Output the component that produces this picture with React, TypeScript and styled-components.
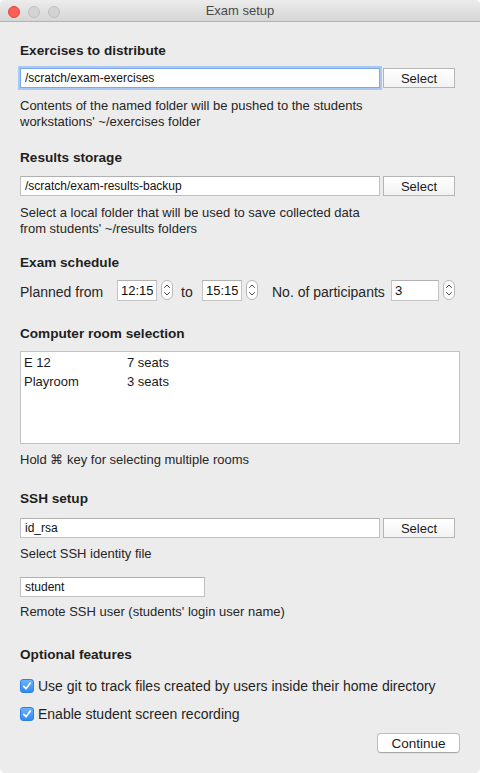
import styled, { createGlobalStyle } from "styled-components";

const GlobalStyle = createGlobalStyle`
  html, body {
    margin: 0;
    padding: 0;
    background: #ffffff;
  }
  body {
    font-family: "Liberation Sans", Arial, sans-serif;
    font-size: 13px;
    color: #262626;
  }
  * {
    box-sizing: border-box;
  }
`;

const Window = styled.div`
  width: 480px;
  height: 773px;
  background-color: #ececec;
  border-radius: 5px;
  overflow: hidden;
  display: flex;
  flex-direction: column;
`;

const TitleBar = styled.div`
  display: grid;
  grid-template-columns: 1fr auto 1fr;
  align-items: center;
  height: 22px;
  background: linear-gradient(#ececec, #d6d6d6);
  border-bottom: 1px solid #b3b3b3;
`;

const Lights = styled.div`
  display: flex;
  gap: 8px;
  padding-left: 8px;
  padding-top: 3px;
`;

type LightProps = {
  $color: string;
  $edge: string;
};
const Light = styled.span<LightProps>`
  width: 12px;
  height: 12px;
  border-radius: 50%;
  background-color: ${(props) => props.$color};
  border: 1px solid ${(props) => props.$edge};
`;

const Title = styled.div`
  font-size: 13px;
  color: #4a4a4a;
  line-height: 16px;
  padding-top: 1px;
`;

const Body = styled.div`
  padding: 21px 20px 0 20px;
  display: flex;
  flex-direction: column;
`;

type SpacedProps = {
  $top: number;
};

const Section = styled.section<SpacedProps>`
  margin-top: ${(props) => props.$top}px;
  display: flex;
  flex-direction: column;
`;

const Heading = styled.h2`
  margin: 0;
  font-size: 13.6px;
  font-weight: 700;
  line-height: 16px;
  color: #1e1e1e;
`;

const Help = styled.p<SpacedProps>`
  margin: ${(props) => props.$top}px 0 0 0;
  line-height: 16px;
  color: #262626;
`;

const FieldRow = styled.div<SpacedProps>`
  margin-top: ${(props) => props.$top}px;
  display: flex;
  gap: 3px;
  width: 435px;
  height: 20px;
`;

type TextFieldProps = {
  $focused?: boolean;
  $width?: number;
};
const TextField = styled.input<TextFieldProps>`
  flex: ${(props) => (props.$width ? "none" : "1")};
  width: ${(props) => (props.$width ? `${props.$width}px` : "auto")};
  height: 20px;
  margin: 0;
  padding: 0 4px;
  font-family: "Liberation Sans", Arial, sans-serif;
  font-size: 12px;
  color: #111111;
  background-color: #ffffff;
  border: 1px solid ${(props) => (props.$focused ? "#7ba9ea" : "#c1c1c1")};
  border-top-color: ${(props) => (props.$focused ? "#7ba9ea" : "#b0b0b0")};
  border-radius: 0;
  outline: none;
  box-shadow: ${(props) =>
    props.$focused ? "0 0 0 2px #a9c8f2" : "none"};
`;

const SelectButton = styled.button`
  width: 72px;
  height: 20px;
  margin: 0;
  padding: 0;
  font-family: "Liberation Sans", Arial, sans-serif;
  font-size: 13px;
  color: #1a1a1a;
  background: linear-gradient(#ffffff, #f2f2f2);
  border: 1px solid #b5b5b5;
  border-radius: 0;
`;

const ScheduleRow = styled.div<SpacedProps>`
  margin-top: ${(props) => props.$top}px;
  display: flex;
  align-items: center;
  height: 22px;
`;

type RowLabelProps = {
  $width: number;
  $lead?: number;
};
const RowLabel = styled.span<RowLabelProps>`
  width: ${(props) => props.$width}px;
  margin-left: ${(props) => props.$lead ?? 0}px;
  font-size: 14px;
  line-height: 16px;
  padding-top: 3px;
  color: #262626;
  white-space: nowrap;
`;

const SpinBox = styled.div`
  display: flex;
  align-items: center;
  gap: 4px;
`;

type SpinFieldProps = {
  $width: number;
};
const SpinField = styled.input<SpinFieldProps>`
  width: ${(props) => props.$width}px;
  height: 21px;
  margin: 0;
  padding: 0 3px;
  font-family: "Liberation Sans", Arial, sans-serif;
  font-size: 13px;
  color: #111111;
  background-color: #ffffff;
  border: 1px solid #c4c4c4;
  border-top-color: #b2b2b2;
  border-radius: 0;
  outline: none;
`;

const SpinArrows = styled.span`
  display: flex;
  width: 12px;
  height: 20px;
  border: 1px solid #b8b8b8;
  border-radius: 6px;
  background-color: #ffffff;
`;

const Spin = ({ value, width }: { value: string; width: number }) => (
  <SpinBox>
    <SpinField $width={width} value={value} readOnly />
    <SpinArrows>
      <svg width="10" height="18" viewBox="0 0 10 18">
        <path
          d="M2.5 6.5 L5 4 L7.5 6.5 M2.5 11.5 L5 14 L7.5 11.5"
          fill="none"
          stroke="#4a4a4a"
          strokeWidth="1"
          strokeLinecap="round"
          strokeLinejoin="round"
        />
      </svg>
    </SpinArrows>
  </SpinBox>
);

const RoomList = styled.div<SpacedProps>`
  margin-top: ${(props) => props.$top}px;
  height: 93px;
  width: 440px;
  background-color: #ffffff;
  border: 1px solid #c3c3c3;
  padding-top: 1px;
`;

const RoomRow = styled.div`
  display: grid;
  grid-template-columns: 103px 1fr;
  height: 19px;
  line-height: 19px;
  padding-left: 3px;
  color: #1a1a1a;
`;

const CheckRow = styled.label<SpacedProps>`
  margin-top: ${(props) => props.$top}px;
  display: flex;
  align-items: center;
  gap: 4px;
  height: 16px;
  font-size: 14px;
  line-height: 16px;
  color: #1f1f1f;
  white-space: nowrap;
`;

const CheckBox = styled.span`
  display: flex;
  align-items: center;
  justify-content: center;
  flex: none;
  width: 14px;
  height: 14px;
  border-radius: 3px;
  background: linear-gradient(#6cb3fa, #2f8bf6);
  border: 1px solid #2e7fe0;
`;

const Footer = styled.div<SpacedProps>`
  margin-top: ${(props) => props.$top}px;
  display: flex;
  justify-content: flex-end;
`;

const ContinueButton = styled.button`
  width: 83px;
  height: 20px;
  margin: 0;
  padding: 0;
  font-family: "Liberation Sans", Arial, sans-serif;
  font-size: 13.5px;
  color: #1a1a1a;
  background-color: #ffffff;
  border: 1px solid #bcbcbc;
  border-bottom-color: #a9a9a9;
  border-radius: 4px;
  box-shadow: 0 1px 0 rgba(0, 0, 0, 0.04);
`;

const Check = ({ children, top }: { children: string; top: number }) => (
  <CheckRow $top={top}>
    <CheckBox>
      <svg width="10" height="10" viewBox="0 0 10 10">
        <path
          d="M1.8 5.4 L4 7.8 L8.3 2"
          fill="none"
          stroke="#ffffff"
          strokeWidth="1.6"
          strokeLinecap="round"
          strokeLinejoin="round"
        />
      </svg>
    </CheckBox>
    {children}
  </CheckRow>
);

const rooms = [
  { name: "E 12", seats: 7 },
  { name: "Playroom", seats: 3 },
];

export default function App() {
  return (
    <>
      <GlobalStyle />
      <Window>
        <TitleBar>
          <Lights>
            <Light $color="#fc5f57" $edge="#e0443e" />
            <Light $color="#d3d3d3" $edge="#c0c0c0" />
            <Light $color="#d3d3d3" $edge="#c0c0c0" />
          </Lights>
          <Title>Exam setup</Title>
          <span />
        </TitleBar>
        <Body>
          <Section $top={0}>
            <Heading>Exercises to distribute</Heading>
            <FieldRow $top={9}>
              <TextField $focused value="/scratch/exam-exercises" readOnly />
              <SelectButton>Select</SelectButton>
            </FieldRow>
            <Help $top={10}>
              Contents of the named folder will be pushed to the students
              <br />
              workstations' ~/exercises folder
            </Help>
          </Section>

          <Section $top={20}>
            <Heading>Results storage</Heading>
            <FieldRow $top={10}>
              <TextField value="/scratch/exam-results-backup" readOnly />
              <SelectButton>Select</SelectButton>
            </FieldRow>
            <Help $top={9}>
              Select a local folder that will be used to save collected data
              <br />
              from students' ~/results folders
            </Help>
          </Section>

          <Section $top={18}>
            <Heading>Exam schedule</Heading>
            <ScheduleRow $top={8}>
              <RowLabel $width={97}>Planned from</RowLabel>
              <Spin value="12:15" width={40} />
              <RowLabel $width={21} $lead={8}>
                to
              </RowLabel>
              <Spin value="15:15" width={40} />
              <RowLabel $width={119} $lead={14}>
                No. of participants
              </RowLabel>
              <Spin value="3" width={48} />
            </ScheduleRow>
          </Section>

          <Section $top={25}>
            <Heading>Computer room selection</Heading>
            <RoomList $top={9}>
              {rooms.map((room) => (
                <RoomRow key={room.name}>
                  <span>{room.name}</span>
                  <span>{room.seats} seats</span>
                </RoomRow>
              ))}
            </RoomList>
            <Help $top={8}>Hold ⌘ key for selecting multiple rooms</Help>
          </Section>

          <Section $top={23}>
            <Heading>SSH setup</Heading>
            <FieldRow $top={11}>
              <TextField value="id_rsa" readOnly />
              <SelectButton>Select</SelectButton>
            </FieldRow>
            <Help $top={8}>Select SSH identity file</Help>
            <FieldRow $top={15}>
              <TextField $width={185} value="student" readOnly />
            </FieldRow>
            <Help $top={7}>Remote SSH user (students' login user name)</Help>
          </Section>

          <Section $top={27}>
            <Heading>Optional features</Heading>
            <Check top={15}>
              Use git to track files created by users inside their home directory
            </Check>
            <Check top={12}>Enable student screen recording</Check>
          </Section>

          <Footer $top={11}>
            <ContinueButton>Continue</ContinueButton>
          </Footer>
        </Body>
      </Window>
    </>
  );
}
